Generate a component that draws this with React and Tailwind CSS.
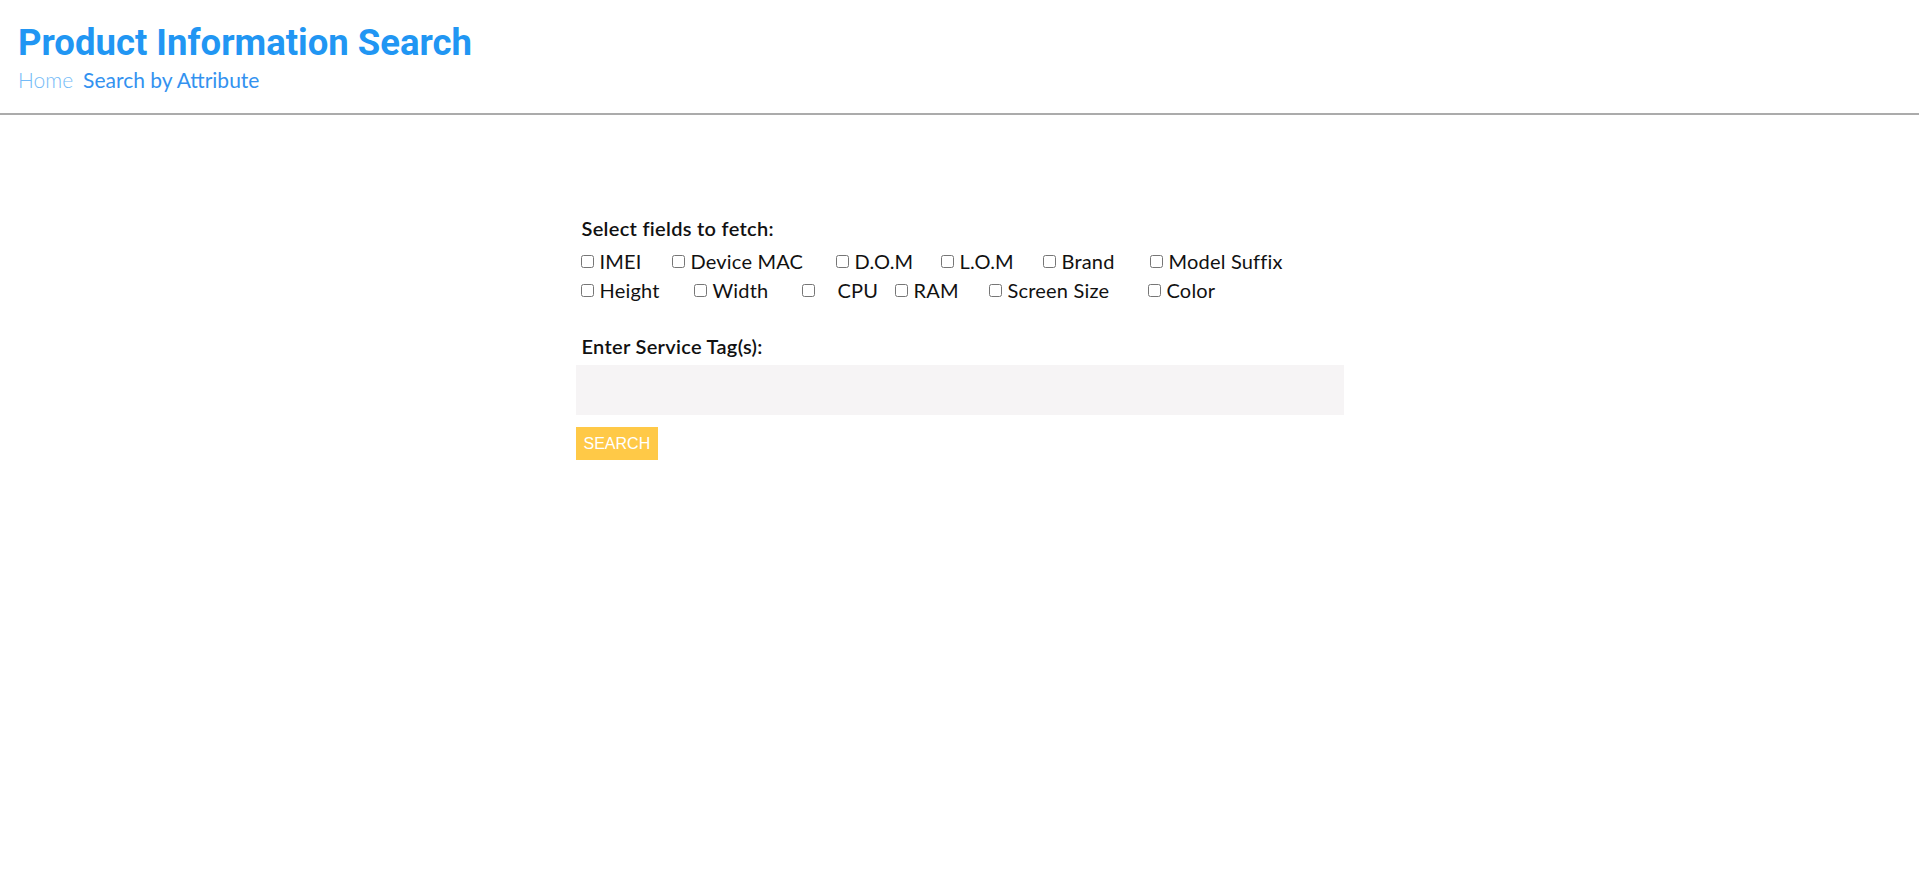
import React from "react";

const rowOne = [
    { label: "IMEI", width: "w-[91px]" },
    { label: "Device MAC", width: "w-[164px]" },
    { label: "D.O.M", width: "w-[105px]" },
    { label: "L.O.M", width: "w-[102px]" },
    { label: "Brand", width: "w-[107px]" },
    { label: "Model Suffix", width: "w-auto" },
];

const rowTwo = [
    { label: "Height", width: "w-[113px]" },
    { label: "Width", width: "w-[108px]" },
    { label: "CPU", width: "w-[93px]", gap: "ml-[17px]" },
    { label: "RAM", width: "w-[94px]" },
    { label: "Screen Size", width: "w-[159px]" },
    { label: "Color", width: "w-auto" },
];

const Field = ({ label, width, gap }) => (
    <label className={`flex items-center shrink-0 ${width}`}>
        <input type="checkbox" className="m-0 ml-[-1px] mr-[6px] w-[13px] h-[13px] accent-[#2196f3]" />
        <span className={gap || ""}>{label}</span>
    </label>
);

const App = () => {
    return (
        <div className="min-h-screen bg-white font-['Lato','Noto_Sans',sans-serif]">
            <header className="px-[18px] pt-[21px] pb-[21px] border-b-2 border-[#ababab]">
                <h1 className="font-['Roboto',sans-serif] font-bold text-[36.5px] leading-[43px] text-[#2196f3]">
                    Product Information Search
                </h1>
                <nav className="flex gap-[10px] mt-[4px] text-[21px] leading-[24px]">
                    <a href="#" className="text-[#74bbf7] font-light">Home</a>
                    <a href="#" className="text-[#3392f0]">Search by Attribute</a>
                </nav>
            </header>

            <main className="mx-auto w-[768px] mt-[101px]">
                <div className="px-[6px]">
                    <p className="text-[20px] leading-[24px] font-semibold tracking-[0.3px] text-[#111]">
                        Select fields to fetch:
                    </p>
                    <div className="mt-[7px] text-[20px] leading-[29px] tracking-[0.2px] text-[#111]">
                        <div className="flex">
                            {rowOne.map((f) => (
                                <Field key={f.label} {...f} />
                            ))}
                        </div>
                        <div className="flex">
                            {rowTwo.map((f) => (
                                <Field key={f.label} {...f} />
                            ))}
                        </div>
                    </div>
                    <p className="mt-[29px] text-[20px] leading-[24px] font-semibold tracking-[0.3px] text-[#111]">
                        Enter Service Tag(s):
                    </p>
                </div>
                <input
                    type="text"
                    className="block w-full h-[50px] mt-[7px] bg-[#f6f4f5] outline-none px-2"
                />
                <button className="mt-[12px] h-[33px] px-[8px] bg-[#ffc947] text-white text-[16px] font-['Liberation_Sans',Arial,sans-serif]">
                    SEARCH
                </button>
            </main>
        </div>
    );
};

export default App;
